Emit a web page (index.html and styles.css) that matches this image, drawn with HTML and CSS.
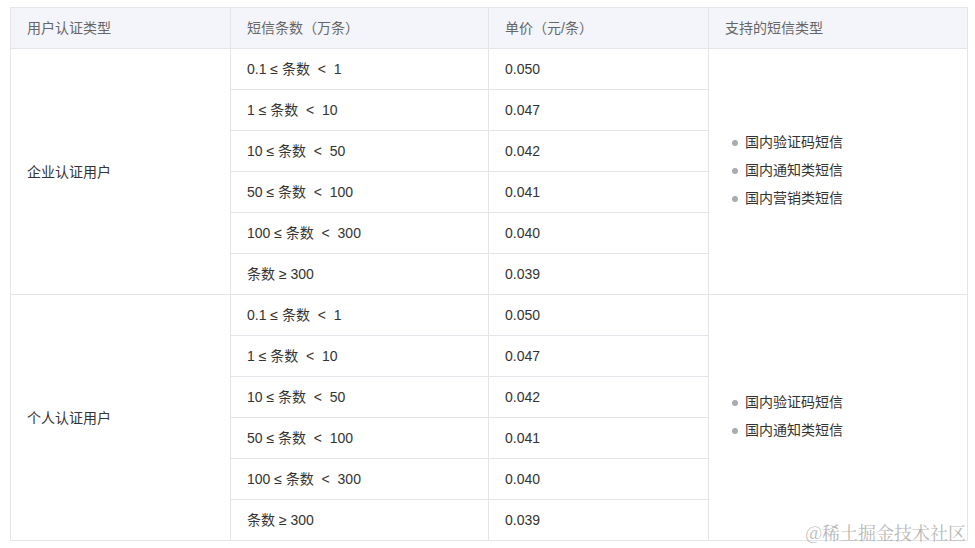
FILE: index.html
```html
<!DOCTYPE html>
<html lang="zh-CN">
<head>
<meta charset="utf-8">
<link rel="stylesheet" href="styles.css">
</head>
<body>
<div class="wrap">
<table class="price">
  <colgroup>
    <col class="c1"><col class="c2"><col class="c3"><col class="c4">
  </colgroup>
  <thead>
    <tr><th>用户认证类型</th><th>短信条数（万条）</th><th>单价（元/条）</th><th>支持的短信类型</th></tr>
  </thead>
  <tbody>
    <tr><td rowspan="6">企业认证用户</td><td>0.1 ≤ 条数&nbsp; &lt;&nbsp; 1</td><td>0.050</td>
      <td rowspan="6"><ul class="types"><li>国内验证码短信</li><li>国内通知类短信</li><li>国内营销类短信</li></ul></td></tr>
    <tr><td>1 ≤ 条数&nbsp; &lt;&nbsp; 10</td><td>0.047</td></tr>
    <tr><td>10 ≤ 条数&nbsp; &lt;&nbsp; 50</td><td>0.042</td></tr>
    <tr><td>50 ≤ 条数&nbsp; &lt;&nbsp; 100</td><td>0.041</td></tr>
    <tr><td>100 ≤ 条数&nbsp; &lt;&nbsp; 300</td><td>0.040</td></tr>
    <tr><td>条数 ≥ 300</td><td>0.039</td></tr>
    <tr><td rowspan="6">个人认证用户</td><td>0.1 ≤ 条数&nbsp; &lt;&nbsp; 1</td><td>0.050</td>
      <td rowspan="6"><ul class="types"><li>国内验证码短信</li><li>国内通知类短信</li></ul></td></tr>
    <tr><td>1 ≤ 条数&nbsp; &lt;&nbsp; 10</td><td>0.047</td></tr>
    <tr><td>10 ≤ 条数&nbsp; &lt;&nbsp; 50</td><td>0.042</td></tr>
    <tr><td>50 ≤ 条数&nbsp; &lt;&nbsp; 100</td><td>0.041</td></tr>
    <tr><td>100 ≤ 条数&nbsp; &lt;&nbsp; 300</td><td>0.040</td></tr>
    <tr><td>条数 ≥ 300</td><td>0.039</td></tr>
  </tbody>
</table>
<div class="watermark">@稀土掘金技术社区</div>
</div>
</body>
</html>
```

FILE: styles.css
```css
html, body {
  margin: 0;
  padding: 0;
  background: #fff;
}
body {
  font-family: "Liberation Sans", "Noto Sans CJK SC", sans-serif;
  font-size: 14px;
  color: #333;
}
.wrap {
  position: relative;
  padding: 7px 9px 8px 10px;
}
.price {
  border-collapse: collapse;
  table-layout: fixed;
  width: 957px;
}
.c1 { width: 220px; }
.c2 { width: 258px; }
.c3 { width: 220px; }
.c4 { width: 259px; }
.price th, .price td {
  border: 1px solid #e3e5ea;
  padding: 0 0 0 16px;
  height: 40px;
  text-align: left;
  vertical-align: middle;
  line-height: 20px;
}
.price th {
  background: #f3f5fa;
  font-weight: normal;
  color: #666;
}
.types {
  margin: 0;
  padding: 0 0 3px 20px;
  list-style: none;
}
.types li {
  position: relative;
  line-height: 28px;
}
.types li::before {
  content: "";
  position: absolute;
  left: -13px;
  top: 12px;
  width: 6px;
  height: 6px;
  border-radius: 50%;
  background: #a9abb3;
}
.watermark {
  position: absolute;
  right: 9px;
  bottom: 6px;
  font-family: "Noto Serif CJK SC", "Liberation Serif", serif;
  font-size: 18px;
  color: rgba(150, 150, 150, 0.7);
  line-height: 22px;
}
```
